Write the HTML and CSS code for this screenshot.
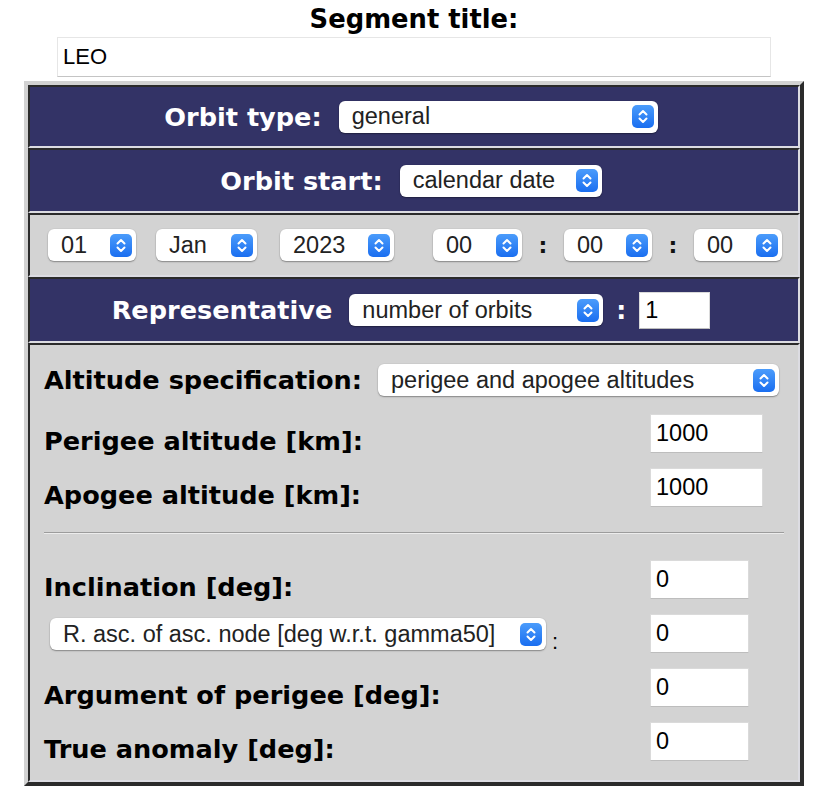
FILE: index.html
```html
<!DOCTYPE html>
<html>
<head>
<meta charset="utf-8">
<link rel="stylesheet" href="styles.css">
</head>
<body>
<div class="page">
  <div class="title">Segment title:</div>
  <input class="title-input" type="text" value="LEO">
  <div class="panel">
    <div class="row navy r1">
      <span class="lbl-w">Orbit type:</span>
      <div class="select w-orbit"><span>general</span><svg class="chev" viewBox="0 0 22 23" width="22" height="23"><defs><linearGradient id="g1" x1="0" y1="0" x2="0" y2="1"><stop offset="0" stop-color="#4b9cfb"/><stop offset="1" stop-color="#1a6ef0"/></linearGradient></defs><rect x="0" y="0" width="22" height="23" rx="5" fill="url(#g1)"/><path d="M7.5 9.5 L11 6 L14.5 9.5 M7.5 13.5 L11 17 L14.5 13.5" fill="none" stroke="#fff" stroke-width="2" stroke-linecap="round" stroke-linejoin="round"/></svg></div>
    </div>
    <div class="row navy r2">
      <span class="lbl-w">Orbit start:</span>
      <div class="select w-start"><span>calendar date</span><svg class="chev" viewBox="0 0 22 23" width="22" height="23"><rect x="0" y="0" width="22" height="23" rx="5" fill="url(#g1)"/><path d="M7.5 9.5 L11 6 L14.5 9.5 M7.5 13.5 L11 17 L14.5 13.5" fill="none" stroke="#fff" stroke-width="2" stroke-linecap="round" stroke-linejoin="round"/></svg></div>
    </div>
    <div class="row gray r3">
      <div class="select w-d"><span>01</span><svg class="chev" viewBox="0 0 22 23" width="22" height="23"><rect x="0" y="0" width="22" height="23" rx="5" fill="url(#g1)"/><path d="M7.5 9.5 L11 6 L14.5 9.5 M7.5 13.5 L11 17 L14.5 13.5" fill="none" stroke="#fff" stroke-width="2" stroke-linecap="round" stroke-linejoin="round"/></svg></div>
      <div class="select w-mon"><span>Jan</span><svg class="chev" viewBox="0 0 22 23" width="22" height="23"><rect x="0" y="0" width="22" height="23" rx="5" fill="url(#g1)"/><path d="M7.5 9.5 L11 6 L14.5 9.5 M7.5 13.5 L11 17 L14.5 13.5" fill="none" stroke="#fff" stroke-width="2" stroke-linecap="round" stroke-linejoin="round"/></svg></div>
      <div class="select w-yr"><span>2023</span><svg class="chev" viewBox="0 0 22 23" width="22" height="23"><rect x="0" y="0" width="22" height="23" rx="5" fill="url(#g1)"/><path d="M7.5 9.5 L11 6 L14.5 9.5 M7.5 13.5 L11 17 L14.5 13.5" fill="none" stroke="#fff" stroke-width="2" stroke-linecap="round" stroke-linejoin="round"/></svg></div>
      <div class="select w-hh"><span>00</span><svg class="chev" viewBox="0 0 22 23" width="22" height="23"><rect x="0" y="0" width="22" height="23" rx="5" fill="url(#g1)"/><path d="M7.5 9.5 L11 6 L14.5 9.5 M7.5 13.5 L11 17 L14.5 13.5" fill="none" stroke="#fff" stroke-width="2" stroke-linecap="round" stroke-linejoin="round"/></svg></div>
      <span class="tcolon">:</span>
      <div class="select w-t"><span>00</span><svg class="chev" viewBox="0 0 22 23" width="22" height="23"><rect x="0" y="0" width="22" height="23" rx="5" fill="url(#g1)"/><path d="M7.5 9.5 L11 6 L14.5 9.5 M7.5 13.5 L11 17 L14.5 13.5" fill="none" stroke="#fff" stroke-width="2" stroke-linecap="round" stroke-linejoin="round"/></svg></div>
      <span class="tcolon">:</span>
      <div class="select w-t"><span>00</span><svg class="chev" viewBox="0 0 22 23" width="22" height="23"><rect x="0" y="0" width="22" height="23" rx="5" fill="url(#g1)"/><path d="M7.5 9.5 L11 6 L14.5 9.5 M7.5 13.5 L11 17 L14.5 13.5" fill="none" stroke="#fff" stroke-width="2" stroke-linecap="round" stroke-linejoin="round"/></svg></div>
    </div>
    <div class="row navy r4">
      <span class="lbl-w">Representative</span>
      <div class="select w-rep"><span>number of orbits</span><svg class="chev" viewBox="0 0 22 23" width="22" height="23"><rect x="0" y="0" width="22" height="23" rx="5" fill="url(#g1)"/><path d="M7.5 9.5 L11 6 L14.5 9.5 M7.5 13.5 L11 17 L14.5 13.5" fill="none" stroke="#fff" stroke-width="2" stroke-linecap="round" stroke-linejoin="round"/></svg></div>
      <span class="rcolon">:</span>
      <input class="field w-rep-in" type="text" value="1">
    </div>
    <div class="row gray r5">
      <div class="alt-row">
        <span class="lbl">Altitude specification:</span>
        <div class="select w-alt"><span>perigee and apogee altitudes</span><svg class="chev" viewBox="0 0 22 23" width="22" height="23"><rect x="0" y="0" width="22" height="23" rx="5" fill="url(#g1)"/><path d="M7.5 9.5 L11 6 L14.5 9.5 M7.5 13.5 L11 17 L14.5 13.5" fill="none" stroke="#fff" stroke-width="2" stroke-linecap="round" stroke-linejoin="round"/></svg></div>
      </div>
      <div class="fields f1">
        <span class="lbl lbl-f">Perigee altitude [km]:</span>
        <input class="field w-km" type="text" value="1000">
        <span class="lbl lbl-f">Apogee altitude [km]:</span>
        <input class="field w-km" type="text" value="1000">
      </div>
      <div class="sep"></div>
      <div class="fields f2">
        <span class="lbl lbl-f">Inclination [deg]:</span>
        <input class="field w-deg" type="text" value="0">
        <div class="raan">
          <div class="select w-raan"><span>R. asc. of asc. node [deg w.r.t. gamma50]</span><svg class="chev" viewBox="0 0 22 23" width="22" height="23"><rect x="0" y="0" width="22" height="23" rx="5" fill="url(#g1)"/><path d="M7.5 9.5 L11 6 L14.5 9.5 M7.5 13.5 L11 17 L14.5 13.5" fill="none" stroke="#fff" stroke-width="2" stroke-linecap="round" stroke-linejoin="round"/></svg></div>
          <span class="raan-colon">:</span>
        </div>
        <input class="field w-deg" type="text" value="0">
        <span class="lbl lbl-f">Argument of perigee [deg]:</span>
        <input class="field w-deg" type="text" value="0">
        <span class="lbl lbl-f">True anomaly [deg]:</span>
        <input class="field w-deg" type="text" value="0">
      </div>
    </div>
  </div>
</div>
</body>
</html>
```

FILE: styles.css
```css
html, body {
  margin: 0;
  padding: 0;
  background: #ffffff;
}

.page {
  width: 820px;
  padding-top: 4px;
}

.title {
  text-align: center;
  margin-left: 24px;
  width: 780px;
  font-family: "DejaVu Sans", Verdana, sans-serif;
  font-weight: bold;
  font-size: 25.8px;
  line-height: 30px;
  height: 30px;
  color: #000;
}

.title-input {
  display: block;
  box-sizing: border-box;
  margin: 3px 0 0 57px;
  width: 714px;
  height: 40px;
  border: 1px solid #e6e6e6;
  border-bottom-color: #c4c4c4;
  background: #fff;
  padding: 0 5px;
  font-family: "Liberation Sans", Arial, sans-serif;
  font-size: 22px;
  color: #000;
  outline: none;
}

.panel {
  box-sizing: border-box;
  margin: 4px 0 0 24px;
  width: 780px;
  border-style: solid;
  border-width: 4px;
  border-color: #d2d2d2 #2b2b2b #2b2b2b #d2d2d2;
  background: #d3d3d3;
}

.row {
  box-sizing: border-box;
  border-style: solid;
  border-width: 2px;
  border-color: #2b2b2b #dcdce2 #dcdce2 #2b2b2b;
}

.navy {
  background: #333366;
  display: flex;
  align-items: center;
  justify-content: center;
  padding-right: 6px;
}

.gray {
  background: #d3d3d3;
}

.r1 { height: 63px; gap: 17px; }
.r2 { height: 65px; gap: 17px; }
.r4 { height: 66px; }

.r3 {
  height: 64px;
  display: flex;
  align-items: center;
  padding-left: 18px;
}

.lbl-w {
  font-family: "DejaVu Sans", Verdana, sans-serif;
  font-weight: bold;
  font-size: 25.6px;
  color: #fff;
  white-space: nowrap;
}

.lbl {
  font-family: "DejaVu Sans", Verdana, sans-serif;
  font-weight: bold;
  font-size: 25.6px;
  color: #000;
  white-space: nowrap;
}

.select {
  box-sizing: border-box;
  display: flex;
  align-items: center;
  justify-content: space-between;
  height: 32px;
  background: #fff;
  border-radius: 6px;
  box-shadow: 0 1px 1.5px rgba(0, 0, 0, 0.35), 0 0 0 0.5px rgba(0, 0, 0, 0.06);
  padding: 0 4px 0 13px;
  font-family: "Liberation Sans", Arial, sans-serif;
  font-size: 23.5px;
  color: #222;
  white-space: nowrap;
  flex: none;
}

.select span {
  overflow: hidden;
}

.chev {
  flex: none;
  display: block;
}

.w-orbit { width: 319px; }
.w-start { width: 202px; }
.w-rep { width: 254px; margin-left: 17px; }
.w-alt { width: 401px; }
.w-raan { width: 496px; }
.w-d { width: 88px; }
.w-mon { width: 101px; margin-left: 20px; }
.w-yr { width: 114px; margin-left: 23px; }
.w-hh { width: 89px; margin-left: 39px; }
.w-t { width: 88px; }

.tcolon {
  width: 42px;
  text-align: center;
  font-family: "DejaVu Sans", Verdana, sans-serif;
  font-weight: bold;
  font-size: 22px;
  color: #111;
}

.rcolon {
  width: 36px;
  text-align: center;
  font-family: "DejaVu Sans", Verdana, sans-serif;
  font-weight: bold;
  font-size: 25px;
  color: #fff;
}

.field {
  box-sizing: border-box;
  display: block;
  height: 39px;
  border: 1px solid #dadada;
  border-bottom-color: #bdbdbd;
  background: #fff;
  padding: 0 5px;
  font-family: "Liberation Sans", Arial, sans-serif;
  font-size: 23.5px;
  color: #000;
  outline: none;
  margin: 0;
}

.w-rep-in { width: 71px; height: 37px; }
.w-km { width: 113px; }
.w-deg { width: 99px; }

.r5 {
  padding: 19px 19px 19px 14px;
}

.alt-row {
  display: flex;
  align-items: center;
  justify-content: space-between;
  height: 32px;
}

.fields {
  display: grid;
  grid-template-columns: 606px auto;
  grid-auto-rows: 39px;
  row-gap: 15px;
  align-items: start;
}

.f1 { margin-top: 18px; }
.f2 { margin-top: 26px; }

.lbl-f {
  display: block;
  line-height: 26px;
  margin-top: 14px;
}

.sep {
  margin-top: 25px;
  margin-right: -5px;
  height: 0;
  border-top: 1px solid #9c9c9c;
  border-bottom: 1px solid #ececec;
}

.raan {
  display: flex;
  align-items: flex-end;
  padding-left: 6px;
  height: 39px;
  padding-top: 4px;
  box-sizing: border-box;
}

.raan .select {
  align-self: flex-start;
}

.raan-colon {
  margin-left: 6px;
  font-family: "Liberation Sans", Arial, sans-serif;
  font-size: 22px;
  line-height: 22px;
  color: #000;
}
```
